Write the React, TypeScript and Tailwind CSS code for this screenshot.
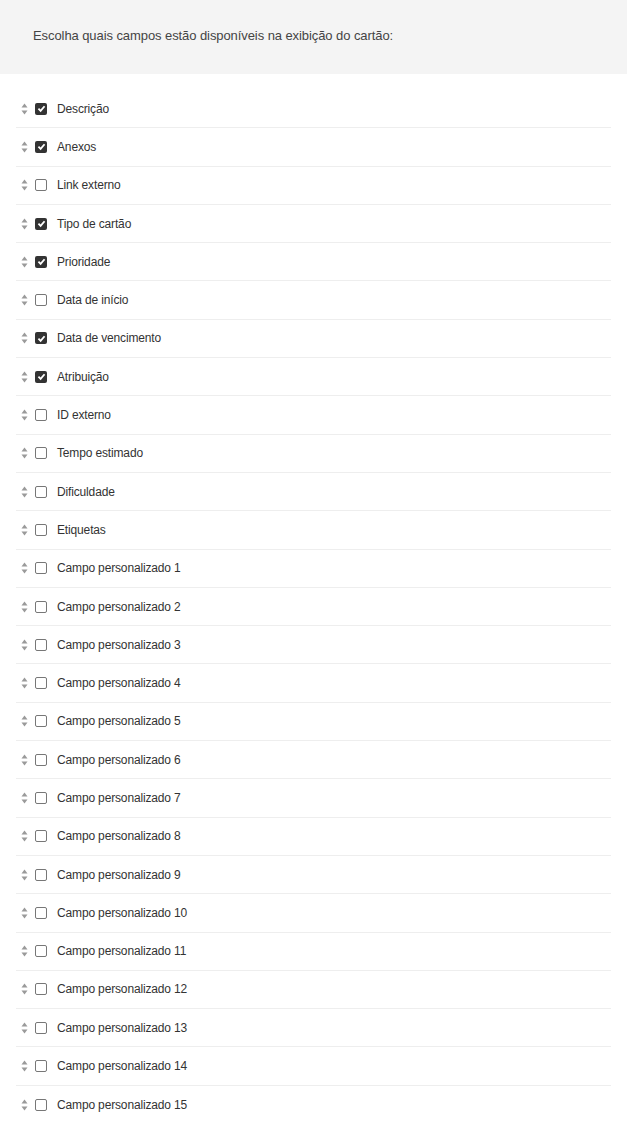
const FIELDS: { label: string; on: boolean }[] = [
  { label: "Descrição", on: true },
  { label: "Anexos", on: true },
  { label: "Link externo", on: false },
  { label: "Tipo de cartão", on: true },
  { label: "Prioridade", on: true },
  { label: "Data de início", on: false },
  { label: "Data de vencimento", on: true },
  { label: "Atribuição", on: true },
  { label: "ID externo", on: false },
  { label: "Tempo estimado", on: false },
  { label: "Dificuldade", on: false },
  { label: "Etiquetas", on: false },
  ...Array.from({ length: 15 }, (_, i) => ({ label: `Campo personalizado ${i + 1}`, on: false })),
];

function SortHandle() {
  return (
    <svg width="7" height="12" viewBox="0 0 7 12" className="shrink-0">
      <path d="M3.5 0.5 L6.5 4.5 L0.5 4.5 Z" fill="#9a9a9a" />
      <path d="M3.5 11.5 L6.5 7.5 L0.5 7.5 Z" fill="#9a9a9a" />
    </svg>
  );
}

function Check({ on }: { on: boolean }) {
  if (on)
    return (
      <span className="w-[12px] h-[12px] rounded-[2px] bg-[#333] flex items-center justify-center shrink-0">
        <svg width="9" height="9" viewBox="0 0 10 10">
          <path d="M1.6 5.2 L4 7.6 L8.4 2.5" fill="none" stroke="#fff" strokeWidth="2" />
        </svg>
      </span>
    );
  return <span className="w-[12px] h-[12px] rounded-[2px] border border-[#777] bg-white shrink-0" />;
}

export default function App() {
  return (
    <div className="min-h-screen bg-white font-['Liberation_Sans',Arial,sans-serif] text-[#333]">
      {/* Header */}
      <div className="bg-[#f4f4f4] h-[74px] px-[33px] pt-[26px]">
        <p className="text-[13px] leading-[20px] tracking-[-0.08px] text-[#444]">
          Escolha quais campos estão disponíveis na exibição do cartão:
        </p>
      </div>

      {/* Field list */}
      <ul className="mx-[16px] mt-[16px]">
        {FIELDS.map((f, i) => (
          <li
            key={f.label}
            className={`h-[38.3px] flex items-center ${i < FIELDS.length - 1 ? "border-b border-[#eeeeee]" : ""}`}
          >
            <span className="ml-[5px] flex items-center">
              <SortHandle />
            </span>
            <span className="ml-[7px] flex items-center">
              <Check on={f.on} />
            </span>
            <span className="ml-[10px] text-[12px] tracking-[-0.15px] text-[#333]">{f.label}</span>
          </li>
        ))}
      </ul>
    </div>
  );
}
